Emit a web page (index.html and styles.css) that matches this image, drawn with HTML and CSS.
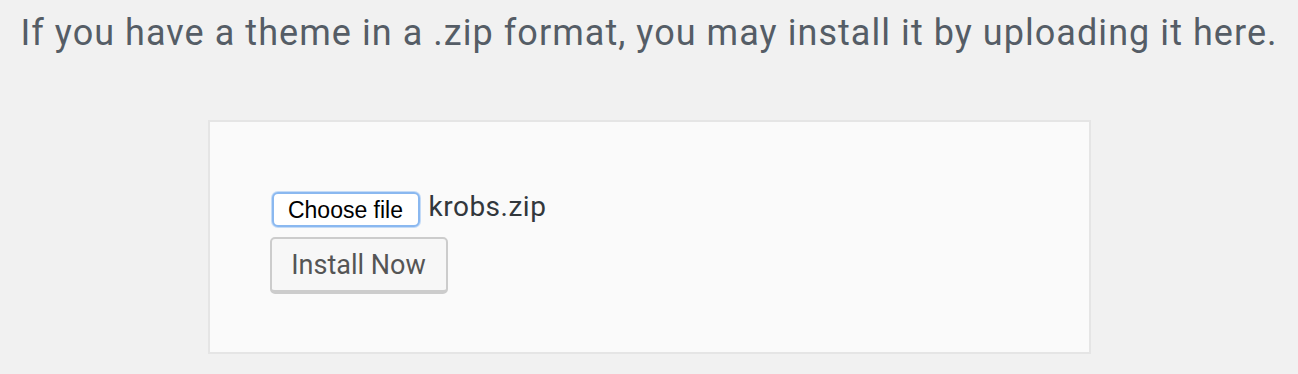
FILE: index.html
```html
<!DOCTYPE html>
<html>
<head>
<meta charset="utf-8">
<link rel="stylesheet" href="styles.css">
</head>
<body>
<p class="intro">If you have a theme in a .zip format, you may install it by uploading it here.</p>
<form class="upload-box">
  <div class="file-row">
    <span class="choose-btn">Choose file</span>
    <span class="file-name">krobs.zip</span>
  </div>
  <button type="button" class="install-btn">Install Now</button>
</form>
</body>
</html>
```
FILE: styles.css
```css
html, body {
  margin: 0;
  padding: 0;
  background: #f1f1f1;
}
body {
  font-family: Roboto, "Liberation Sans", sans-serif;
  width: 1298px;
  height: 374px;
  overflow: hidden;
}
.intro {
  margin: 12px 0 0;
  text-align: center;
  font-size: 36px;
  line-height: 42px;
  letter-spacing: 1.05px;
  color: #555d66;
}
.upload-box {
  box-sizing: border-box;
  width: 883px;
  height: 234px;
  margin: 66px auto 0;
  background: #fafafa;
  border: 2px solid #e5e5e5;
  padding: 70px 0 0 62px;
  display: flex;
  flex-direction: column;
  align-items: flex-start;
  gap: 10px;
}
.file-row {
  display: flex;
  align-items: center;
  gap: 9px;
}
.choose-btn {
  box-sizing: border-box;
  height: 35px;
  width: 148px;
  display: flex;
  align-items: center;
  justify-content: center;
  border: 2px solid #8ab8f0;
  border-radius: 6px;
  background: #fff;
  box-shadow: 0 0 0 1px #c4dbf7;
  font-family: "Liberation Sans", Arial, sans-serif;
  font-size: 23px;
  padding-top: 2px;
  color: #000;
}
.file-name {
  font-size: 28px;
  letter-spacing: 0.5px;
  color: #32373c;
  margin-top: -7px;
}
.install-btn {
  box-sizing: border-box;
  width: 178px;
  height: 57px;
  border: 2px solid #cccccc;
  border-bottom-width: 4px;
  border-radius: 5px;
  background: #f7f7f7;
  font-family: Roboto, "Liberation Sans", sans-serif;
  font-size: 27px;
  color: #555;
  padding: 0;
  margin-left: -2px;
}
```
